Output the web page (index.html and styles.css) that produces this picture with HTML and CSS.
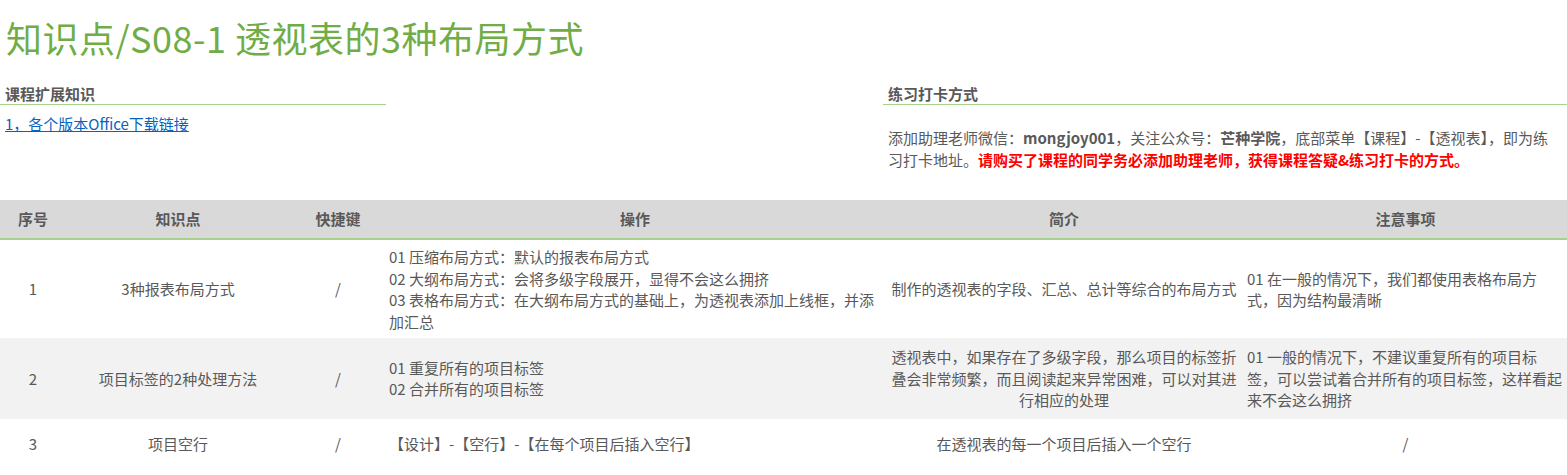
FILE: index.html
```html
<!DOCTYPE html>
<html lang="zh-CN">
<head>
<meta charset="utf-8">
<title>知识点/S08-1 透视表的3种布局方式</title>
<link rel="stylesheet" href="styles.css">
</head>
<body>
<h1 class="title">知识点/S08-1 透视表的3种布局方式</h1>
<div class="info">
  <div class="info-col info-left">
    <h2 class="info-head">课程扩展知识</h2>
    <p class="info-link"><a href="#">1，各个版本Office下载链接</a></p>
  </div>
  <div class="info-col info-right">
    <h2 class="info-head">练习打卡方式</h2>
    <p class="info-text">添加助理老师微信：<b>mongjoy001</b>，关注公众号：<b>芒种学院</b>，底部菜单【课程】-【透视表】，即为练习打卡地址。<strong class="warn">请购买了课程的同学务必添加助理老师，获得课程答疑&amp;练习打卡的方式。</strong></p>
  </div>
</div>
<table class="grid">
  <colgroup>
    <col class="c1"><col class="c2"><col class="c3"><col class="c4"><col class="c5"><col class="c6">
  </colgroup>
  <thead>
    <tr><th>序号</th><th>知识点</th><th>快捷键</th><th>操作</th><th>简介</th><th>注意事项</th></tr>
  </thead>
  <tbody>
    <tr>
      <td class="ctr">1</td>
      <td class="ctr">3种报表布局方式</td>
      <td class="ctr">/</td>
      <td>01 压缩布局方式：默认的报表布局方式<br>02 大纲布局方式：会将多级字段展开，显得不会这么拥挤<br>03 表格布局方式：在大纲布局方式的基础上，为透视表添加上线框，并添加汇总</td>
      <td class="ctr">制作的透视表的字段、汇总、总计等综合的布局方式</td>
      <td>01 在一般的情况下，我们都使用表格布局方式，因为结构最清晰</td>
    </tr>
    <tr class="alt">
      <td class="ctr">2</td>
      <td class="ctr">项目标签的2种处理方法</td>
      <td class="ctr">/</td>
      <td>01 重复所有的项目标签<br>02 合并所有的项目标签</td>
      <td class="ctr">透视表中，如果存在了多级字段，那么项目的标签折叠会非常频繁，而且阅读起来异常困难，可以对其进行相应的处理</td>
      <td>01 一般的情况下，不建议重复所有的项目标签，可以尝试着合并所有的项目标签，这样看起来不会这么拥挤</td>
    </tr>
    <tr class="tall">
      <td class="ctr">3</td>
      <td class="ctr">项目空行</td>
      <td class="ctr">/</td>
      <td>【设计】-【空行】-【在每个项目后插入空行】</td>
      <td class="ctr">在透视表的每一个项目后插入一个空行</td>
      <td class="ctr">/</td>
    </tr>
  </tbody>
</table>
</body>
</html>
```

FILE: styles.css
```css
html, body {
  margin: 0;
  padding: 0;
  background: #ffffff;
}
body {
  width: 1567px;
  font-family: "Noto Sans CJK SC", "Noto Sans", sans-serif;
  color: #595959;
  font-size: 15px;
}
.title {
  margin: 16px 0 0 0;
  padding-left: 6px;
  font-size: 36px;
  line-height: 43px;
  font-weight: 400;
  letter-spacing: 0.5px;
  color: #70ad47;
}
.info {
  display: flex;
  justify-content: space-between;
  margin-top: 25px;
}
.info-left {
  width: 386px;
}
.info-right {
  width: 684px;
}
.info-head {
  margin: 0;
  padding-left: 5px;
  font-size: 15px;
  line-height: 20px;
  font-weight: 700;
  color: #595959;
  border-bottom: 1px solid #a9d18e;
}
.info-link {
  margin: 8px 0 0 0;
  padding-left: 5px;
  line-height: 22px;
}
.info-link a {
  color: #0563c1;
  text-decoration: underline;
}
.info-text {
  margin: 22px 0 0 0;
  padding-left: 5px;
  padding-right: 6px;
  line-height: 22px;
}
.info-text b {
  font-weight: 700;
}
.warn {
  color: #ff0000;
  font-weight: 700;
}
.grid {
  margin-top: 29px;
  width: 1567px;
  border-collapse: collapse;
  table-layout: fixed;
  font-size: 15px;
  line-height: 21.5px;
}
.c1 { width: 66px; }
.c2 { width: 224px; }
.c3 { width: 96px; }
.c4 { width: 498px; }
.c5 { width: 360px; }
.c6 { width: 323px; }
.grid th {
  background: #d9d9d9;
  height: 39px;
  padding: 0 3px;
  font-weight: 700;
  color: #595959;
  text-align: center;
  vertical-align: middle;
  border-bottom: 2px solid #a9d18e;
  box-sizing: border-box;
}
.grid td {
  padding: 6px 3px;
  vertical-align: middle;
  text-align: left;
  color: #595959;
}
.grid td.ctr {
  text-align: center;
}
.grid tr.alt td {
  padding-top: 8px;
  padding-bottom: 8px;
  background: #f2f2f2;
}
.grid tr.tall td {
  height: 39px;
}
```
